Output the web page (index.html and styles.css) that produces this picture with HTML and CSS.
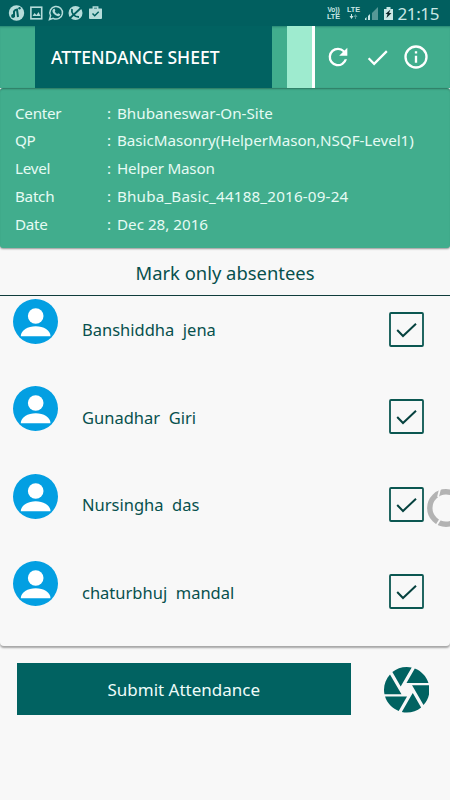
FILE: index.html
```html
<!DOCTYPE html>
<html lang="en">
<head>
<meta charset="utf-8">
<title>Attendance Sheet</title>
<link rel="stylesheet" href="styles.css">
</head>
<body>
<svg class="defs" aria-hidden="true">
  <symbol id="person" viewBox="0 0 45 45"><circle cx="22.5" cy="22.5" r="22.5" fill="#039fe2"/><circle cx="22.7" cy="17" r="7.8" fill="#fff"/><path d="M7.8 37.2c0-6 7-10 14.9-10s14.8 4 14.8 10z" fill="#fff"/></symbol>
  <symbol id="tick" viewBox="0 0 35 35"><rect x="1" y="1" width="33" height="33" rx="1" fill="none" stroke="#0b5751" stroke-width="1.8"/><path d="M8.2 18l5.800 6L27 11.700" fill="none" stroke="#06423f" stroke-width="2"/></symbol>
</svg>
<header class="status">
  <div class="notices">
    <svg width="98" height="18" viewBox="0 0 98 18">
      <g fill="#b5dcda"><circle cx="8.5" cy="9" r="7.7"/><circle cx="67.5" cy="9" r="7"/><path d="M81.500 4.500h12q.500 0 .500.500v9q0 1-1 1h-11q-1 0-1-1V5q0-.500.500-.500z"/></g>
      <path d="M85.300 5V3h4.400v2" fill="none" stroke="#b5dcda" stroke-width="1.500"/>
      <path d="M84.500 9.500l2.200 2.200 4-4" fill="none" stroke="#015f5f" stroke-width="1.500"/>
      <g fill="none" stroke="#015f5f" stroke-width="2"><path d="M6 13V7.500q1-2 3-2l1 7.500"/></g>
      <g fill="#015f5f"><circle cx="5" cy="12" r="1.900"/><circle cx="11.500" cy="4.300" r="1.200"/></g>
      <rect x="22.900" y="3.200" width="10.800" height="11.600" fill="none" stroke="#b5dcda" stroke-width="1.600"/><path d="M24.500 12l2-3 2 2 2-3 2 4z" fill="#b5dcda"/>
      <path d="M41.500 15.500l1.100-3.800a6.300 6.300 0 1 1 2.600 2.600z" fill="none" stroke="#b5dcda" stroke-width="1.500"/><path d="M45 5.500c1-1.500 2-1 2.300 1l-.500 1q1 2 2.500 2.500l1-.700 2 1c-.500 3-4 2-6 0s-2.300-3.500-1.300-4.800z" fill="#b5dcda"/>
      <path d="M61 15L74 3M64 5c-1 4 2 8 7 8" fill="none" stroke="#015f5f" stroke-width="1.800"/>
    </svg>
  </div>
  <div class="system">
    <span class="net"><span class="volte">Vo))</span><span>LTE</span></span>
    <span class="net data"><span>LTE</span><svg width="9" height="5" viewBox="0 0 9 5"><path d="M2 0h1v2h1.500L2.500 5 .500 2H2z" fill="#c9e7e5"/><path d="M6 5h1V3h1.500L6.500 0l-2 3H6z" fill="#569896"/></svg></span>
    <svg class="level" width="28" height="16" viewBox="0 0 28 16"><path d="M13 1v13H7V7z" fill="#569896"/><path d="M0 14v-1.500l1.500-1.500v3zM3 14v-4l2-2v6z" fill="#c9e7e5"/><path d="M19 3h2.500V1h4v2H28v11h-9z" fill="#c9e7e5"/><path d="M25.500 3.500L20.500 8h2L21.500 12l5-5h-2.500z" fill="#10282b"/></svg>
    <span class="clock">21:15</span>
  </div>
</header>
<nav class="bar">
  <h1><span class="t-title">ATTENDANCE SHEET</span></h1>
  <i class="stripe"></i>
  <div class="actions">
    <svg width="28" height="28" viewBox="0 0 24 24"><path d="M17.650 6.350A7.960 7.960 0 0 0 12 4a8 8 0 1 0 7.730 10h-2.080A6 6 0 1 1 12 6c1.660 0 3.140.690 4.220 1.780L13 11h7V4z"/></svg>
    <svg width="27" height="27" viewBox="0 0 24 24"><path d="M9 16.170L4.830 12l-1.420 1.410L9 19 21 7l-1.410-1.410z"/></svg>
    <svg width="28" height="28" viewBox="0 0 24 24"><path d="M11 17h2v-6h-2zM12 2a10 10 0 1 0 0 20 10 10 0 0 0 0-20zm0 18a8 8 0 1 1 0-16 8 8 0 0 1 0 16zM11 9h2V7h-2z"/></svg>
  </div>
</nav>
<dl class="info">
  <dt>Center</dt><dd>:</dd><dd><span class="t-center">Bhubaneswar-On-Site</span></dd>
  <dt>QP</dt><dd>:</dd><dd><span class="t-qp">BasicMasonry(HelperMason,NSQF-Level1)</span></dd>
  <dt>Level</dt><dd>:</dd><dd><span class="t-level">Helper Mason</span></dd>
  <dt>Batch</dt><dd>:</dd><dd><span class="t-batch">Bhuba_Basic_44188_2016-09-24</span></dd>
  <dt>Date</dt><dd>:</dd><dd><span class="t-date">Dec 28, 2016</span></dd>
</dl>
<h2><span class="t-mark">Mark only absentees</span></h2>
<main class="list">
  <div class="row"><svg class="avatar"><use href="#person"/></svg><span class="name">Banshiddha&nbsp; jena</span><svg class="check"><use href="#tick"/></svg></div>
  <div class="row"><svg class="avatar"><use href="#person"/></svg><span class="name">Gunadhar&nbsp; Giri</span><svg class="check"><use href="#tick"/></svg></div>
  <div class="row"><svg class="avatar"><use href="#person"/></svg><span class="name">Nursingha&nbsp; das</span><svg class="check"><use href="#tick"/></svg>
    <svg class="handle" viewBox="0 0 23 38"><circle cx="19" cy="19" r="16.200" fill="none" stroke="#b3b3b3" stroke-width="5.400"/><path d="M13 0l-2 8M9 37l5-8" stroke="#f8f8f8" stroke-width="1.800"/></svg></div>
  <div class="row"><svg class="avatar"><use href="#person"/></svg><span class="name">chaturbhuj&nbsp; mandal</span><svg class="check"><use href="#tick"/></svg></div>
</main>
<footer class="foot">
  <button class="submit"><span class="t-submit">Submit Attendance</span></button>
  <svg class="camera" viewBox="2 2 20 20"><path d="M9.400 10.500l4.770-8.260C13.470 2.090 12.750 2 12 2c-2.400 0-4.600.850-6.320 2.250l3.660 6.350.060-.100zM21.540 9c-.920-2.920-3.150-5.260-6-6.340L11.880 9h9.660zm.260 1h-7.490l.290.500 4.760 8.250C21 16.970 22 14.610 22 12c0-.690-.070-1.350-.200-2zM8.540 12l-3.900-6.750C3.010 7.030 2 9.390 2 12c0 .690.070 1.350.200 2h7.490l-1.150-2zm-6.080 3c.920 2.920 3.150 5.260 6 6.340L12.120 15H2.460zm11.270 0l-3.900 6.760c.700.150 1.420.240 2.170.240 2.400 0 4.600-.850 6.320-2.250l-3.660-6.350-.930 1.600z"/></svg>
</footer>
</body>
</html>
```
FILE: styles.css
```css
* { box-sizing: border-box; }
body { margin: 0; height: 800px; background: #f8f8f8; font-family: "Noto Sans", sans-serif; overflow: hidden; }
.defs { display: none; }
svg { display: block; flex: none; }
span { white-space: nowrap; }

.status { height: 26px; display: flex; justify-content: space-between; background: #015f5f; color: #c9e7e5; padding: 4px 11px 0 8px; }
.system { display: flex; }
.net { display: flex; flex-direction: column; align-items: center; gap: 0; width: 14px; margin: 2px 6px 0 0; font: bold 7.3px/7px "Liberation Sans", sans-serif; }
.net span { height: 7px; }
.net .volte { font-size: 6.6px; }
.net.data { margin-right: 4px; }
.net.data svg { margin-top: 1px; }
.level { margin-top: 2px; }
.clock { font-size: 17px; line-height: 19px; margin-left: 5px; letter-spacing: -0.4px; }

.bar { height: 62px; display: flex; background: #41ad8d; padding-left: 35px; box-shadow: inset 0 2px 2px -1px #014f4f66; }
.bar h1 { margin: 0; width: 237px; background: #016261; color: #fff; font-size: 17.5px; font-weight: 500; line-height: 63px; padding-left: 16px; }
.stripe { width: 28px; margin-left: 15px; background: #9eebcf; border-right: 3px solid #fff; }
.actions { display: flex; align-items: center; fill: #fff; margin-left: 9px; gap: 11.5px; }

.info { margin: 0; height: 160px; background: #41ad8d; color: #e6fbf4; display: grid; grid-template-columns: 92px 10px 1fr; grid-auto-rows: 27.8px; line-height: 28px; padding: 10.5px 0 0 15px; font-size: 15.2px; border-radius: 3px; box-shadow: inset 0 2px 2px -1px #0005, 0 1px 2px #0006; }
.info dd { margin: 0; }
.info dt { letter-spacing: -0.25px; }
.t-qp { letter-spacing: -0.03px; }
.t-level { letter-spacing: -0.2px; }
.t-batch { letter-spacing: 0.18px; }

h2 { margin: 0; height: 48px; border-bottom: 1.500px solid #103d3c; text-align: center; font-size: 18.4px; font-weight: 400; line-height: 50px; color: #07504d; }

.list { height: 350px; border-radius: 0 0 4px 4px; box-shadow: 0 2px 2px #0005; }
.row { height: 87.5px; display: flex; position: relative; padding-left: 13px; }
.avatar { width: 45px; height: 45px; margin-top: 2.5px; }
.name { width: 306px; padding-left: 24px; line-height: 67.5px; font-size: 16.5px; color: #07504d; }
.check { width: 35px; height: 35px; margin: 15.500px 0 0 25px; }
.handle { position: absolute; right: 0; top: 18px; width: 23px; height: 38px; }

.foot { display: flex; padding: 17px 0 0 16.500px; }
.submit { width: 334.500px; height: 52px; border: 0; padding: 0; background: #016261; color: #eefcf9; font: 17px "Noto Sans", sans-serif; }
.camera { width: 45.500px; height: 45.500px; margin: 4px 0 0 32.500px; fill: #016261; }
```
